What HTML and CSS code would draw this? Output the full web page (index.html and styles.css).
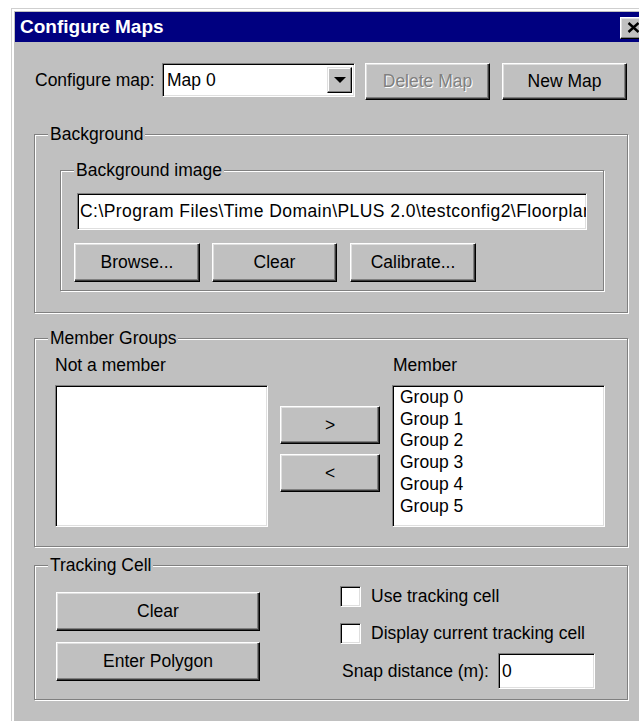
FILE: index.html
```html
<!DOCTYPE html>
<html>
<head>
<meta charset="utf-8">
<title>Configure Maps</title>
<link rel="stylesheet" href="styles.css">
</head>
<body>
<div class="window">
  <div class="titlebar">
    <span class="title">Configure Maps</span>
    <div class="close-btn">
      <svg width="13" height="11" viewBox="0 0 13 11">
        <path d="M1.5 1 L11.5 10 M11.5 1 L1.5 10" stroke="#000" stroke-width="2.4" fill="none"/>
      </svg>
    </div>
  </div>

  <div class="client">
    <div class="map-row">
      <span class="map-label">Configure map:</span>
      <div class="combo">
        <span class="combo-value">Map 0</span>
        <span class="combo-btn">
          <svg width="12" height="6" viewBox="0 0 12 6"><polygon points="0,0 12,0 6,6" fill="#000"/></svg>
        </span>
      </div>
      <div class="btn btn-top btn-delete disabled">Delete Map</div>
      <div class="btn btn-top btn-new">New Map</div>
    </div>

    <div class="group group-bg">
      <span class="group-label">Background</span>
      <div class="group group-image">
        <span class="group-label">Background image</span>
        <div class="field path-field">C:\Program Files\Time Domain\PLUS 2.0\testconfig2\Floorplan.bmp</div>
        <div class="btn-row">
          <div class="btn btn-browse">Browse...</div>
          <div class="btn btn-clear-bg">Clear</div>
          <div class="btn btn-calibrate">Calibrate...</div>
        </div>
      </div>
    </div>

    <div class="group group-members">
      <span class="group-label">Member Groups</span>
      <div class="col-list">
        <div class="list-label">Not a member</div>
        <div class="field listbox"></div>
      </div>
      <div class="col-arrows">
        <div class="btn btn-arrow">&gt;</div>
        <div class="btn btn-arrow">&lt;</div>
      </div>
      <div class="col-list col-member">
        <div class="list-label">Member</div>
        <div class="field listbox">
          <div class="list-item">Group 0</div>
          <div class="list-item">Group 1</div>
          <div class="list-item">Group 2</div>
          <div class="list-item">Group 3</div>
          <div class="list-item">Group 4</div>
          <div class="list-item">Group 5</div>
        </div>
      </div>
    </div>

    <div class="group group-tracking">
      <span class="group-label">Tracking Cell</span>
      <div class="col-cell-btns">
        <div class="btn btn-cell">Clear</div>
        <div class="btn btn-cell">Enter Polygon</div>
      </div>
      <div class="col-cell-opts">
        <div class="check-row">
          <span class="checkbox"></span>
          <span class="check-label">Use tracking cell</span>
        </div>
        <div class="check-row">
          <span class="checkbox"></span>
          <span class="check-label">Display current tracking cell</span>
        </div>
        <div class="snap-row">
          <span class="snap-label">Snap distance (m):</span>
          <div class="field snap-field">0</div>
        </div>
      </div>
    </div>
  </div>
</div>
</body>
</html>
```

FILE: styles.css
```css
* {
  box-sizing: border-box;
}

html, body {
  margin: 0;
  padding: 0;
  background: #ffffff;
  overflow: hidden;
  height: 721px;
}

body {
  font-family: "Liberation Sans", Arial, sans-serif;
  font-size: 17.5px;
  color: #000;
}

/* dialog frame, runs off the right edge of the view */
.window {
  margin: 8px 0 0 11px;
  width: 640px;
  height: 713px;
  background: #c0c0c0;
  border-top: 1px solid #cfcfcf;
  border-left: 1px solid #cfcfcf;
  padding: 3px 0 0 3px;
  box-shadow: inset 2px 2px 0 #ffffff;
}

.titlebar {
  height: 30px;
  background: #000080;
  display: flex;
  align-items: center;
  justify-content: space-between;
  padding: 0 5px 0 5px;
}

.title {
  color: #fff;
  font-weight: bold;
  font-size: 19px;
  line-height: 30px;
}

.close-btn {
  width: 26px;
  height: 22px;
  margin-top: 1px;
  display: flex;
  align-items: center;
  justify-content: center;
  background: #c0c0c0;
  border: 1px solid;
  border-color: #fff #000 #000 #fff;
  box-shadow: inset -1px -1px 0 #808080, inset 1px 1px 0 #dfdfdf;
}

.client {
  padding: 21px 0 0 19px;
}

/* raised push button */
.btn {
  display: flex;
  align-items: center;
  justify-content: center;
  background: #c0c0c0;
  border: 1px solid;
  border-color: #fff #000 #000 #fff;
  box-shadow: inset -1px -1px 0 #3a3a3a, inset -2px -2px 0 #808080, inset 1px 1px 0 #dfdfdf;
  white-space: nowrap;
}

.btn.disabled {
  color: #808080;
  text-shadow: 1px 1px 0 #fff;
}

/* sunken edit / list field */
.field {
  background: #fff;
  border: 1px solid;
  border-color: #808080 #fff #fff #808080;
  box-shadow: inset 1px 1px 0 #000, inset -1px -1px 0 #dfdfdf;
}

/* top row */
.map-row {
  display: flex;
  align-items: flex-start;
  margin-left: 1px;
  height: 37px;
}

.map-label {
  width: 127px;
  line-height: 34px;
  white-space: nowrap;
}

.combo {
  width: 193px;
  height: 34px;
  display: flex;
  align-items: center;
  padding: 3px 2px 3px 4px;
  background: #fff;
  border: 1px solid;
  border-color: #808080 #fff #fff #808080;
  box-shadow: inset 1px 1px 0 #000, inset -1px -1px 0 #dfdfdf;
}

.combo-value {
  flex: 1;
}

.combo-btn {
  width: 25px;
  height: 26px;
  display: flex;
  align-items: center;
  justify-content: center;
  background: #c0c0c0;
  border: 1px solid;
  border-color: #dfdfdf #000 #000 #dfdfdf;
  box-shadow: inset -1px -1px 0 #808080, inset 1px 1px 0 #fff;
}

.btn-top {
  width: 125px;
  height: 37px;
}

.btn-delete {
  margin-left: 10px;
}

.btn-new {
  margin-left: 12px;
}

/* etched group boxes */
.group {
  position: relative;
  border: 1px solid #808080;
  box-shadow: inset 1px 1px 0 #fff, 1px 1px 0 #fff;
}

.group-label {
  position: absolute;
  top: -11px;
  left: 13px;
  padding: 0 2px;
  line-height: 20px;
  background: #c0c0c0;
  white-space: nowrap;
}

.group-bg {
  margin-top: 34px;
  width: 594px;
  height: 179px;
  padding: 35px 0 0 25px;
}

.group-image {
  width: 544px;
  height: 121px;
  padding-top: 22px;
}

/* long path, scrolled so its end is hidden */
.path-field {
  margin-left: 16px;
  width: 510px;
  height: 37px;
  line-height: 35px;
  padding-left: 2px;
  letter-spacing: 0.45px;
  white-space: nowrap;
  overflow: hidden;
}

.btn-row {
  display: flex;
  margin: 13px 0 0 13px;
}

.btn-row .btn {
  height: 39px;
}

.btn-browse {
  width: 126px;
}

.btn-clear-bg {
  width: 125px;
  margin-left: 12px;
}

.btn-calibrate {
  width: 126px;
  margin-left: 13px;
}

/* member groups */
.group-members {
  margin-top: 25px;
  width: 594px;
  height: 209px;
  padding: 16px 0 0 20px;
  display: flex;
  align-items: flex-start;
}

.col-list {
  width: 213px;
}

.list-label {
  line-height: 20px;
  height: 20px;
}

.col-member {
  margin-left: 12px;
}

.col-member .list-label {
  padding-left: 1px;
}

.listbox {
  margin-top: 10px;
  height: 142px;
  padding: 1px 0 0 7px;
}

.list-item {
  line-height: 21.7px;
}

.col-arrows {
  margin-left: 12px;
  width: 100px;
  padding-top: 51px;
  display: flex;
  flex-direction: column;
  gap: 10px;
}

.btn-arrow {
  height: 38px;
}

/* tracking cell */
.group-tracking {
  margin-top: 18px;
  width: 594px;
  height: 135px;
  padding: 20px 0 0 21px;
  display: flex;
  align-items: flex-start;
}

.col-cell-btns {
  margin-top: 6px;
  width: 204px;
  display: flex;
  flex-direction: column;
  gap: 11px;
}

.btn-cell {
  height: 39px;
}

.col-cell-opts {
  margin-left: 80px;
}

.check-row {
  display: flex;
  align-items: center;
  height: 21px;
}

.check-row + .check-row {
  margin-top: 16px;
}

.checkbox {
  width: 21px;
  height: 21px;
  background: #fff;
  border: 1px solid;
  border-color: #808080 #fff #fff #808080;
  box-shadow: inset 1px 1px 0 #000, inset -1px -1px 0 #dfdfdf;
}

.check-label {
  margin-left: 10px;
  white-space: nowrap;
}

.snap-row {
  display: flex;
  align-items: center;
  margin: 9px 0 0 2px;
}

.snap-label {
  width: 156px;
  white-space: nowrap;
}

.snap-field {
  width: 97px;
  height: 36px;
  line-height: 34px;
  padding-left: 3px;
}
```
